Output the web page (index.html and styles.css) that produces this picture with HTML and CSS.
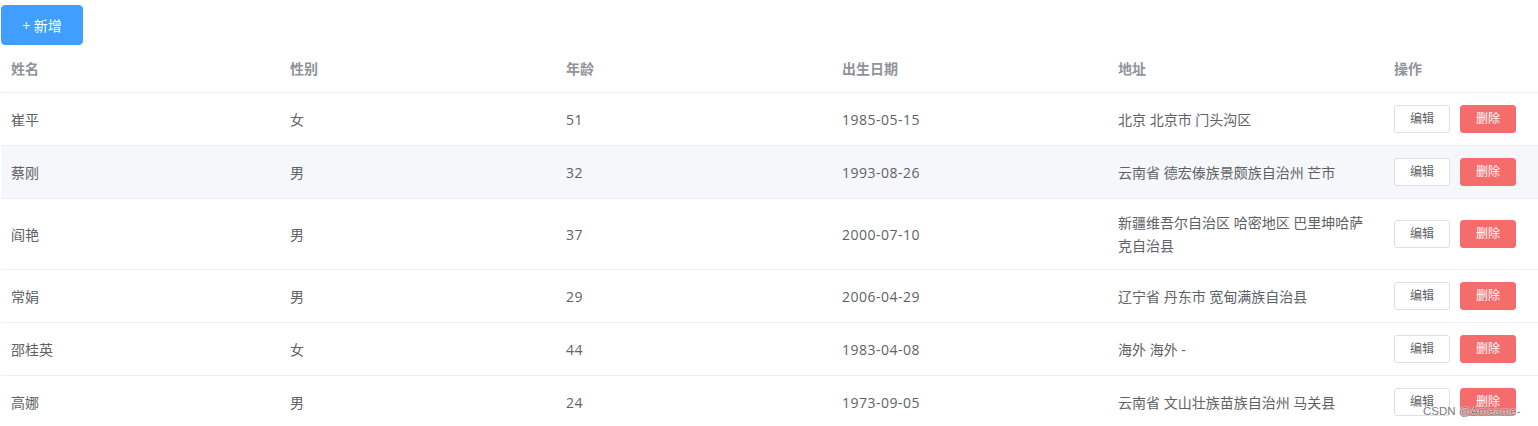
FILE: index.html
```html
<!DOCTYPE html>
<html lang="zh-CN">
<head>
<meta charset="utf-8">
<title>用户列表</title>
<link rel="stylesheet" href="styles.css">
</head>
<body>
<div class="page">
  <div class="toolbar">
    <button class="btn btn-primary">+ 新增</button>
  </div>
  <table class="data-table">
    <colgroup>
      <col class="c-name"><col class="c-std"><col class="c-std"><col class="c-std"><col class="c-std"><col class="c-op">
    </colgroup>
    <thead>
      <tr><th>姓名</th><th>性别</th><th>年龄</th><th>出生日期</th><th>地址</th><th>操作</th></tr>
    </thead>
    <tbody>
      <tr><td>崔平</td><td>女</td><td class="num">51</td><td class="num">1985-05-15</td><td>北京 北京市 门头沟区</td><td><div class="ops"><button class="btn btn-mini">编辑</button><button class="btn btn-mini btn-danger">删除</button></div></td></tr>
      <tr class="striped"><td>蔡刚</td><td>男</td><td class="num">32</td><td class="num">1993-08-26</td><td>云南省 德宏傣族景颇族自治州 芒市</td><td><div class="ops"><button class="btn btn-mini">编辑</button><button class="btn btn-mini btn-danger">删除</button></div></td></tr>
      <tr><td>阎艳</td><td>男</td><td class="num">37</td><td class="num">2000-07-10</td><td>新疆维吾尔自治区 哈密地区 巴里坤哈萨克自治县</td><td><div class="ops"><button class="btn btn-mini">编辑</button><button class="btn btn-mini btn-danger">删除</button></div></td></tr>
      <tr><td>常娟</td><td>男</td><td class="num">29</td><td class="num">2006-04-29</td><td>辽宁省 丹东市 宽甸满族自治县</td><td><div class="ops"><button class="btn btn-mini">编辑</button><button class="btn btn-mini btn-danger">删除</button></div></td></tr>
      <tr><td>邵桂英</td><td>女</td><td class="num">44</td><td class="num">1983-04-08</td><td>海外 海外 -</td><td><div class="ops"><button class="btn btn-mini">编辑</button><button class="btn btn-mini btn-danger">删除</button></div></td></tr>
      <tr><td>高娜</td><td>男</td><td class="num">24</td><td class="num">1973-09-05</td><td>云南省 文山壮族苗族自治州 马关县</td><td><div class="ops"><button class="btn btn-mini">编辑</button><button class="btn btn-mini btn-danger">删除</button></div></td></tr>
    </tbody>
  </table>
</div>
<div class="watermark">CSDN @Ameame-</div>
</body>
</html>
```
FILE: styles.css
```css
html, body {
  margin: 0;
  padding: 0;
  background: #fff;
  overflow: hidden;
}
body {
  font-family: "Open Sans", "Noto Sans CJK SC", sans-serif;
  font-size: 14px;
  color: #606266;
}
.page {
  padding: 5px 0 0 1px;
}
.toolbar {
  display: flex;
}
.btn {
  font-family: inherit;
  cursor: pointer;
  border: 1px solid #dcdfe6;
  background: #fff;
  color: #606266;
  outline: none;
}
.btn-primary {
  width: 82px;
  height: 40px;
  background: #409eff;
  border-color: #409eff;
  color: #fff;
  font-size: 14px;
  border-radius: 4px;
  padding: 0;
}
.data-table {
  width: 1537px;
  table-layout: fixed;
  border-collapse: collapse;
  border-spacing: 0;
}
.c-name { width: 279px; }
.c-std { width: 276px; }
.c-op { width: 154px; }
.data-table th,
.data-table td {
  padding: 12px 10px;
  line-height: 23px;
  text-align: left;
  vertical-align: middle;
  border-bottom: 1px solid #ebeef5;
  font-size: 14px;
}
.data-table th {
  color: #909399;
  font-weight: bold;
}
.data-table td {
  color: #606266;
}
.data-table td.num {
  letter-spacing: 0.5px;
}
.data-table tr.striped td {
  background: #f5f7fa;
}
.ops {
  display: flex;
  gap: 10px;
  align-items: center;
}
.btn-mini {
  width: 56px;
  height: 28px;
  padding: 0;
  font-size: 12px;
  border-radius: 3px;
  line-height: 26px;
}
.btn-danger {
  background: #f56c6c;
  border-color: #f56c6c;
  color: #fff;
}
.watermark {
  position: absolute;
  left: 1423px;
  top: 404px;
  font-family: "Liberation Sans", sans-serif;
  font-size: 11.5px;
  line-height: 14px;
  color: #7a7a7a;
  text-shadow: 0 0 2px #fff, 0 0 1px #fff;
  white-space: nowrap;
}
```
